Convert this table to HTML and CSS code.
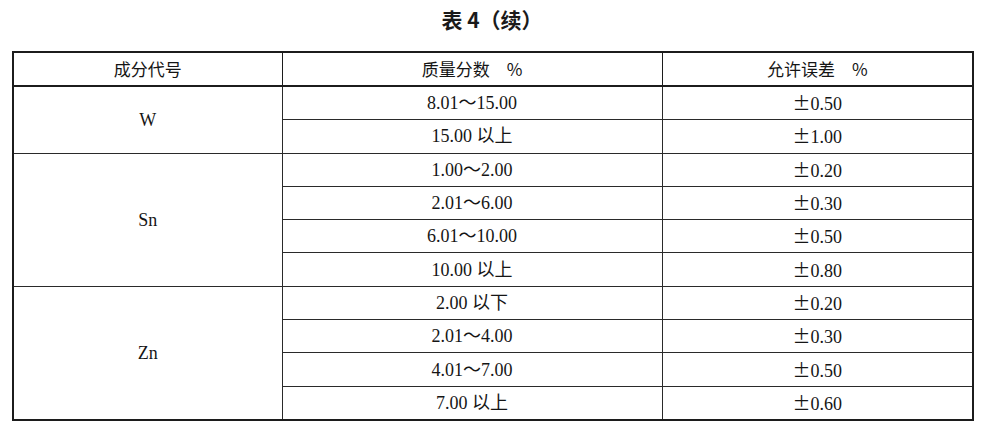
FILE: index.html
```html
<!DOCTYPE html>
<html lang="zh">
<head>
<meta charset="utf-8">
<link rel="stylesheet" href="styles.css">
</head>
<body>
<div class="page">
  <h1 class="title">表 4（续）</h1>
  <table class="spec">
    <colgroup>
      <col class="c1">
      <col class="c2">
      <col class="c3">
    </colgroup>
    <thead>
      <tr>
        <th>成分代号</th>
        <th>质量分数&emsp;%</th>
        <th>允许误差&emsp;%</th>
      </tr>
    </thead>
    <tbody>
      <tr class="grp"><td rowspan="2" class="el">W</td><td>8.01～15.00</td><td><span class="pm">±</span>0.50</td></tr>
      <tr><td>15.00 以上</td><td><span class="pm">±</span>1.00</td></tr>
      <tr class="grp"><td rowspan="4" class="el">Sn</td><td>1.00～2.00</td><td><span class="pm">±</span>0.20</td></tr>
      <tr><td>2.01～6.00</td><td><span class="pm">±</span>0.30</td></tr>
      <tr><td>6.01～10.00</td><td><span class="pm">±</span>0.50</td></tr>
      <tr><td>10.00 以上</td><td><span class="pm">±</span>0.80</td></tr>
      <tr class="grp"><td rowspan="4" class="el">Zn</td><td>2.00 以下</td><td><span class="pm">±</span>0.20</td></tr>
      <tr><td>2.01～4.00</td><td><span class="pm">±</span>0.30</td></tr>
      <tr><td>4.01～7.00</td><td><span class="pm">±</span>0.50</td></tr>
      <tr><td>7.00 以上</td><td><span class="pm">±</span>0.60</td></tr>
    </tbody>
  </table>
</div>
</body>
</html>
```
FILE: styles.css
```css
html, body {
  margin: 0;
  padding: 0;
  background: #fff;
}
.page {
  padding: 0 11px 0 12px;
  width: 960px;
}
.title {
  margin: 0;
  height: 51px;
  padding-top: 6px;
  box-sizing: border-box;
  text-align: center;
  font-family: "Noto Sans CJK SC", sans-serif;
  font-weight: 700;
  font-size: 21px;
  line-height: 26px;
  color: #1a1a1a;
}
.spec {
  width: 960px;
  border-collapse: collapse;
  border: 2px solid #1c1c1c;
  table-layout: fixed;
  color: #151515;
}
.c1 { width: 269px; }
.c2 { width: 380px; }
.c3 { width: 311px; }
.spec th {
  height: 32px;
  padding: 0;
  border: 1px solid #1c1c1c;
  border-bottom: 2px solid #1c1c1c;
  font-family: "Noto Sans CJK SC", sans-serif;
  font-weight: 400;
  font-size: 17px;
  line-height: 20px;
  text-align: center;
}
.spec td {
  height: 32.3px;
  padding: 0;
  border: 1px solid #2a2a2a;
  font-family: "Liberation Serif", "Noto Sans CJK SC", serif;
  font-size: 18px;
  line-height: 20px;
  text-align: center;
  vertical-align: middle;
}
.spec tr.grp td {
  border-top: 1px solid #1c1c1c;
}
.pm {
  font-family: "Noto Sans CJK SC", sans-serif;
  font-size: 18px;
}
```
